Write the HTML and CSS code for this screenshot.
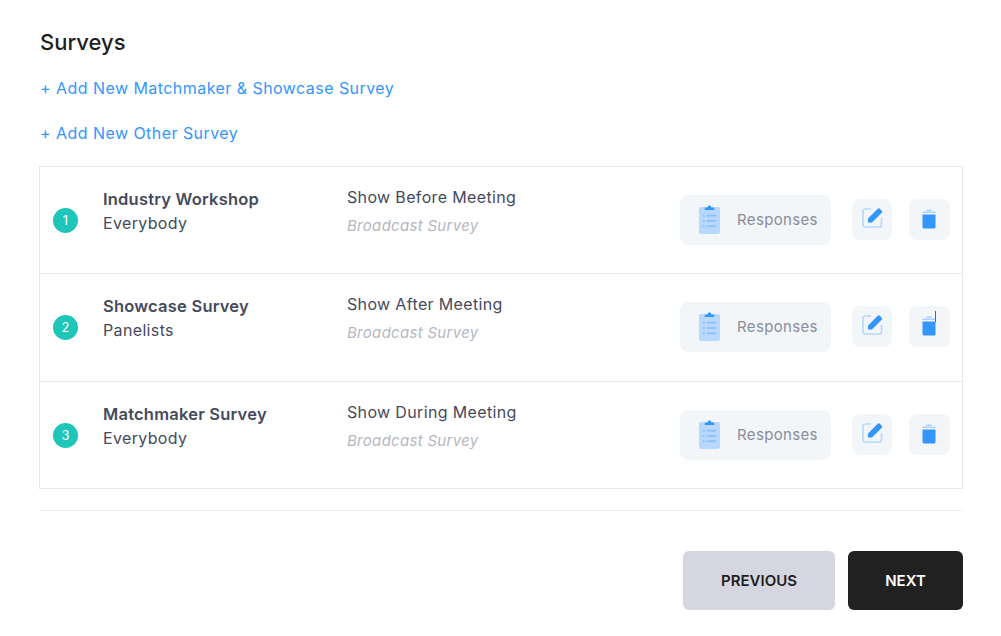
FILE: index.html
```html
<!DOCTYPE html>
<html lang="en">
<head>
<meta charset="utf-8">
<title>Surveys</title>
<link rel="stylesheet" href="styles.css">
</head>
<body>
<svg class="defs" width="0" height="0" aria-hidden="true">
  <defs>
    <symbol id="clip" viewBox="0 0 24 32">
      <rect x="1" y="3" width="22" height="28" rx="2" fill="#b9d8ff"/>
      <path d="M7 6V4.500Q7 3.500 8 3.500H10Q10.500 1 12 1T14 3.500H16Q17 3.500 17 4.500V6Z" fill="#3396ff"/>
      <g fill="#8fc1fb">
        <rect x="5" y="11" width="2" height="2"/><rect x="9" y="11" width="10" height="2"/>
        <rect x="5" y="16.500" width="2" height="2"/><rect x="9" y="16.500" width="10" height="2"/>
        <rect x="5" y="22" width="2" height="2"/><rect x="9" y="22" width="10" height="2"/>
      </g>
    </symbol>
    <symbol id="edit" viewBox="0 0 22 22">
      <path d="M9 2H3.500Q1 2 1 4.500V17.500Q1 20 3.500 20H17Q19.500 20 19.500 17.500V11" fill="none" stroke="#b9d8ff" stroke-width="1.700"/>
      <path d="M6 11.500L15.500 2Q16.500 1 17.500 1.500L20 4Q20.500 5 19.500 6L10 15.500H6Z" fill="#3396ff"/>
    </symbol>
    <symbol id="trash" viewBox="0 0 14 20">
      <rect x="4.500" y="0.500" width="5" height="1.500" fill="#a9d0ff"/>
      <rect x="0.500" y="2.500" width="13" height="1.500" fill="#a9d0ff"/>
      <path d="M0.500 5.500H13.500V18Q13.500 19.500 12 19.500H2Q0.500 19.500 0.500 18Z" fill="#3396ff"/>
    </symbol>
  </defs>
</svg>
<main class="page">
  <h1 class="title">Surveys</h1>
  <a class="add-link" href="#">+ Add New Matchmaker &amp; Showcase Survey</a>
  <a class="add-link" href="#">+ Add New Other Survey</a>

  <section class="survey-list">
    <article class="row">
      <span class="badge">1</span>
      <div class="who"><strong class="name">Industry Workshop</strong><span class="aud">Everybody</span></div>
      <div class="when"><span class="show">Show Before Meeting</span><em class="kind">Broadcast Survey</em></div>
      <button class="responses"><svg class="ic-clip"><use href="#clip"/></svg><span>Responses</span></button>
      <button class="square edit"><svg class="ic-edit"><use href="#edit"/></svg></button>
      <button class="square"><svg class="ic-trash"><use href="#trash"/></svg></button>
    </article>
    <article class="row">
      <span class="badge">2</span>
      <div class="who"><strong class="name">Showcase Survey</strong><span class="aud">Panelists</span></div>
      <div class="when"><span class="show">Show After Meeting</span><em class="kind">Broadcast Survey</em></div>
      <button class="responses"><svg class="ic-clip"><use href="#clip"/></svg><span>Responses</span></button>
      <button class="square edit"><svg class="ic-edit"><use href="#edit"/></svg></button>
      <button class="square"><svg class="ic-trash"><use href="#trash"/></svg><i class="caret"></i></button>
    </article>
    <article class="row">
      <span class="badge">3</span>
      <div class="who"><strong class="name">Matchmaker Survey</strong><span class="aud">Everybody</span></div>
      <div class="when"><span class="show">Show During Meeting</span><em class="kind">Broadcast Survey</em></div>
      <button class="responses"><svg class="ic-clip"><use href="#clip"/></svg><span>Responses</span></button>
      <button class="square edit"><svg class="ic-edit"><use href="#edit"/></svg></button>
      <button class="square"><svg class="ic-trash"><use href="#trash"/></svg></button>
    </article>
  </section>

  <hr class="rule">

  <div class="actions">
    <button class="btn prev">PREVIOUS</button>
    <button class="btn next">NEXT</button>
  </div>
</main>
</body>
</html>
```
FILE: styles.css
```css
* { box-sizing: border-box; }
html, body { margin: 0; background: #fff; }
body { font-family: Inter, "Open Sans", sans-serif; color: #454a5c; overflow: hidden; height: 636px; }
.defs { position: absolute; }
.page { display: flex; flex-direction: column; align-items: flex-start; padding: 29px 38px 0 39px; }
.title { margin: 0 0 20px 1px; font-size: 22px; line-height: 27px; font-weight: 500; color: #1e1e1e; }
.add-link { margin: 0 0 21px; padding-left: 1px; font-size: 16px; line-height: 24px; color: #3396ff; text-decoration: none; letter-spacing: .45px; }
.survey-list { width: 924px; height: 323px; border: 1px solid #e9e9ec; display: grid; grid-auto-rows: 107.330px; }
.row { display: flex; align-items: center; padding: 0 12px 0 13px; border-bottom: 1px solid #e9e9ec; }
.row:last-child { border-bottom: 0; }
.badge { flex: none; width: 25px; height: 25px; margin-top: 1px; border-radius: 50%; background: #1ec6b9; color: #fff; font-size: 13px; line-height: 25px; text-align: center; }
.who, .when { display: flex; flex-direction: column; }
.who { width: 244px; margin-left: 25px; margin-top: -19px; }
.when { width: 333px; margin-top: -17px; }
.name { font-size: 16.500px; line-height: 24px; font-weight: 600; letter-spacing: .22px; }
.aud, .show { font-size: 16px; line-height: 24px; letter-spacing: .35px; }
.aud { color: #454a5c; }
.show { margin-bottom: 5px; }
.kind { font-size: 15px; line-height: 24px; color: #b5b7c2; letter-spacing: .3px; }
button { font-family: inherit; border: 0; padding: 0; cursor: pointer; }
.responses { flex: none; display: flex; align-items: center; width: 151px; height: 50px; padding-left: 18px; margin-top: -1px; border-radius: 8px; background: #f3f6f9; color: #8a8d9b; font-size: 15px; letter-spacing: .35px; }
.ic-clip { width: 23px; height: 33px; margin-right: 16px; }
.square { position: relative; flex: none; display: flex; align-items: center; justify-content: center; width: 41px; height: 41px; margin-top: -2px; border-radius: 8px; background: #f3f6f9; }
.edit { margin-left: 21px; margin-right: 17px; width: 40px; }
.ic-edit { width: 22px; height: 22px; margin-top: -3px; margin-left: 1px; }
.ic-trash { width: 14px; height: 20px; margin-right: 2px; margin-top: -1px; }
.caret { position: absolute; left: 26px; top: 5px; width: 1px; height: 11px; background: #5e6270; }
.rule { align-self: stretch; width: 924px; margin: 21px 0 40px; border: 0; border-top: 1px solid #eeeef0; }
.actions { align-self: stretch; display: flex; justify-content: flex-end; gap: 13px; width: 924px; }
.btn { height: 59px; border-radius: 6px; font-size: 15px; font-weight: 600; }
.prev { width: 152px; background: #d6d6e0; color: #1e1e1e; }
.next { width: 115px; background: #212121; color: #fff; }
```
